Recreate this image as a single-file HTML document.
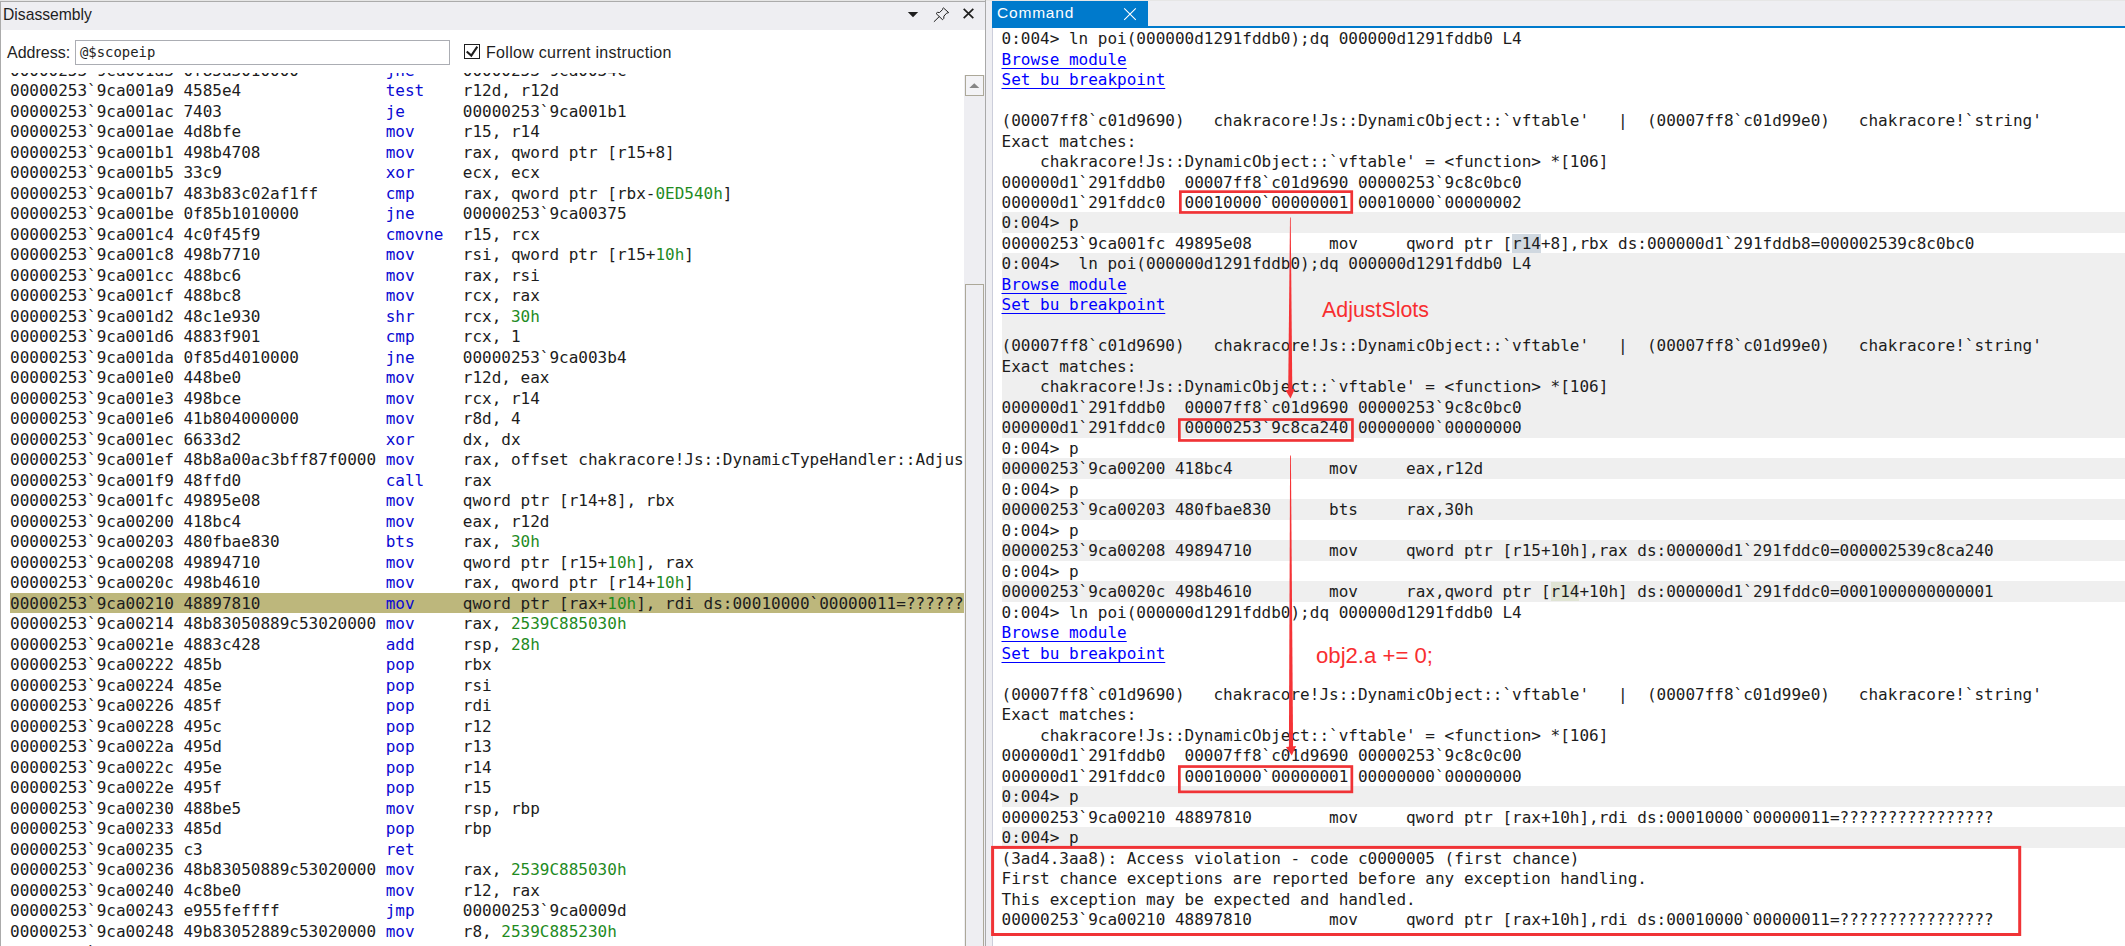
<!DOCTYPE html>
<html lang="en">
<head>
<meta charset="utf-8">
<title>WinDbg - Disassembly / Command</title>
<style>
html,body{margin:0;padding:0;}
body{width:2125px;height:946px;position:relative;overflow:hidden;background:#fff;
 font-family:"Liberation Sans",sans-serif;color:#1e1e1e;}
.abs{position:absolute;}
/* ---------- left panel ---------- */
#lp{position:absolute;left:0;top:0;width:986px;height:946px;background:#fff;overflow:hidden;}
#lp .topb{position:absolute;left:0;top:0;width:986px;height:1px;background:#e6e6e6;border-bottom:1px solid #ababab;}
#lp .leftb{position:absolute;left:0;top:1px;width:1px;height:945px;background:#ababab;}
#lp .rightb{position:absolute;left:985px;top:0;width:1px;height:946px;background:#a9a9a9;}
#ltitle{position:absolute;left:1px;top:2px;width:984px;height:28px;background:#eeeef2;}
#ltitle .t{position:absolute;left:2px;top:0;height:25px;line-height:25px;font-size:15.7px;color:#1e1e1e;}
#addr{position:absolute;left:7px;top:43px;font-size:16px;line-height:20px;color:#1e1e1e;}
#inp{position:absolute;left:75px;top:40px;width:373px;height:23px;border:1px solid #abadb3;background:#fff;
 font-family:"DejaVu Sans Mono","Liberation Mono",monospace;font-size:13.9px;line-height:23px;text-indent:4px;color:#1e1e1e;}
#cb{position:absolute;left:464px;top:44px;width:14px;height:13px;border:1px solid #1e1e1e;background:#fff;}
#cbl{position:absolute;left:486px;top:42.5px;font-size:16px;line-height:20px;letter-spacing:0.3px;color:#1e1e1e;}
#lrows{position:absolute;left:1px;top:73px;width:963px;height:873px;overflow:hidden;}
#lrows .in{position:absolute;left:0;top:-73px;width:963px;height:946px;}
.r,.q{position:absolute;white-space:pre;font-family:"DejaVu Sans Mono","Liberation Mono",monospace;
 font-size:16px;line-height:22px;color:#1c1c1c;}
.r{left:9px;width:954px;}
.r b{font-weight:normal;color:#0a0ad2;}
.r i{font-style:normal;color:#1f8b1f;}
.r.hl{background:#bdb77c;}
#lsb{position:absolute;left:964px;top:75px;width:21px;height:871px;background:#eeeef2;}
#lsb .up{position:absolute;left:1px;top:0px;width:17px;height:19px;border:1px solid #aca899;background:#f3f3f6;}
#lsb .thumb{position:absolute;left:1px;top:209px;width:17px;height:700px;border:1px solid #aca899;background:#eeeef2;}
/* ---------- splitter ---------- */
#split{position:absolute;left:986px;top:0;width:7px;height:946px;background:#eeeef2;border-top:1px solid #e6e6e6;box-sizing:border-box;}
/* ---------- right panel ---------- */
#rp{position:absolute;left:992px;top:0;width:1133px;height:946px;background:#fff;overflow:hidden;}
#rp .strip{position:absolute;left:0;top:0;width:1133px;height:26px;background:#eeeef2;}
#rp .topb{position:absolute;left:0;top:0;width:1133px;height:1px;background:#e6e6e6;}
#tab{position:absolute;left:0;top:1px;width:156px;height:25px;background:#007acc;color:#fff;}
#tab .t{position:absolute;left:5px;top:0;font-size:15.5px;line-height:23px;letter-spacing:0.8px;}
#rp .bl{position:absolute;left:0;top:26px;width:1133px;height:2px;background:#007acc;}
#rp .lb{position:absolute;left:0;top:28px;width:1px;height:918px;background:#cccedb;}
.q{left:1002px;width:1123px;text-indent:-0.5px;}
.q.g{background:#efefef;}
.q a{color:#0000ff;text-decoration:underline;text-underline-offset:3px;text-decoration-thickness:1.4px;}
.sa{background:#d0d8e0;}
.sb{background:#e0e4d4;}
svg{position:absolute;left:0;top:0;}
</style>
</head>
<body>
<div id="lp">
  <div class="topb"></div>
  <div id="ltitle"><div class="t">Disassembly</div></div>
  <div id="addr">Address:</div>
  <div id="inp">@$scopeip</div>
  <div id="cb"></div>
  <div id="cbl">Follow current instruction</div>
  <div id="lrows"><div class="in">
<div class="r" style="top:60px;height:20px">00000253`9ca001a3 0f85a3010000         <b>jne     </b>00000253`9ca0034c</div>
<div class="r" style="top:80px;height:21px">00000253`9ca001a9 4585e4               <b>test    </b>r12d, r12d</div>
<div class="r" style="top:101px;height:20px">00000253`9ca001ac 7403                 <b>je      </b>00000253`9ca001b1</div>
<div class="r" style="top:121px;height:21px">00000253`9ca001ae 4d8bfe               <b>mov     </b>r15, r14</div>
<div class="r" style="top:142px;height:20px">00000253`9ca001b1 498b4708             <b>mov     </b>rax, qword ptr [r15+8]</div>
<div class="r" style="top:162px;height:21px">00000253`9ca001b5 33c9                 <b>xor     </b>ecx, ecx</div>
<div class="r" style="top:183px;height:20px">00000253`9ca001b7 483b83c02af1ff       <b>cmp     </b>rax, qword ptr [rbx-<i>0ED540h</i>]</div>
<div class="r" style="top:203px;height:21px">00000253`9ca001be 0f85b1010000         <b>jne     </b>00000253`9ca00375</div>
<div class="r" style="top:224px;height:20px">00000253`9ca001c4 4c0f45f9             <b>cmovne  </b>r15, rcx</div>
<div class="r" style="top:244px;height:21px">00000253`9ca001c8 498b7710             <b>mov     </b>rsi, qword ptr [r15+<i>10h</i>]</div>
<div class="r" style="top:265px;height:20px">00000253`9ca001cc 488bc6               <b>mov     </b>rax, rsi</div>
<div class="r" style="top:285px;height:21px">00000253`9ca001cf 488bc8               <b>mov     </b>rcx, rax</div>
<div class="r" style="top:306px;height:20px">00000253`9ca001d2 48c1e930             <b>shr     </b>rcx, <i>30h</i></div>
<div class="r" style="top:326px;height:21px">00000253`9ca001d6 4883f901             <b>cmp     </b>rcx, 1</div>
<div class="r" style="top:347px;height:20px">00000253`9ca001da 0f85d4010000         <b>jne     </b>00000253`9ca003b4</div>
<div class="r" style="top:367px;height:21px">00000253`9ca001e0 448be0               <b>mov     </b>r12d, eax</div>
<div class="r" style="top:388px;height:20px">00000253`9ca001e3 498bce               <b>mov     </b>rcx, r14</div>
<div class="r" style="top:408px;height:21px">00000253`9ca001e6 41b804000000         <b>mov     </b>r8d, 4</div>
<div class="r" style="top:429px;height:20px">00000253`9ca001ec 6633d2               <b>xor     </b>dx, dx</div>
<div class="r" style="top:449px;height:21px">00000253`9ca001ef 48b8a00ac3bff87f0000 <b>mov     </b>rax, offset chakracore!Js::DynamicTypeHandler::AdjustSlots (00007ff8`bfc30aa0)</div>
<div class="r" style="top:470px;height:20px">00000253`9ca001f9 48ffd0               <b>call    </b>rax</div>
<div class="r" style="top:490px;height:21px">00000253`9ca001fc 49895e08             <b>mov     </b>qword ptr [r14+8], rbx</div>
<div class="r" style="top:511px;height:20px">00000253`9ca00200 418bc4               <b>mov     </b>eax, r12d</div>
<div class="r" style="top:531px;height:21px">00000253`9ca00203 480fbae830           <b>bts     </b>rax, <i>30h</i></div>
<div class="r" style="top:552px;height:20px">00000253`9ca00208 49894710             <b>mov     </b>qword ptr [r15+<i>10h</i>], rax</div>
<div class="r" style="top:572px;height:21px">00000253`9ca0020c 498b4610             <b>mov     </b>rax, qword ptr [r14+<i>10h</i>]</div>
<div class="r hl" style="top:593px;height:20px">00000253`9ca00210 48897810             <b>mov     </b>qword ptr [rax+<i>10h</i>], rdi ds:00010000`00000011=????????????????</div>
<div class="r" style="top:613px;height:21px">00000253`9ca00214 48b83050889c53020000 <b>mov     </b>rax, <i>2539C885030h</i></div>
<div class="r" style="top:634px;height:20px">00000253`9ca0021e 4883c428             <b>add     </b>rsp, <i>28h</i></div>
<div class="r" style="top:654px;height:21px">00000253`9ca00222 485b                 <b>pop     </b>rbx</div>
<div class="r" style="top:675px;height:20px">00000253`9ca00224 485e                 <b>pop     </b>rsi</div>
<div class="r" style="top:695px;height:21px">00000253`9ca00226 485f                 <b>pop     </b>rdi</div>
<div class="r" style="top:716px;height:20px">00000253`9ca00228 495c                 <b>pop     </b>r12</div>
<div class="r" style="top:736px;height:21px">00000253`9ca0022a 495d                 <b>pop     </b>r13</div>
<div class="r" style="top:757px;height:20px">00000253`9ca0022c 495e                 <b>pop     </b>r14</div>
<div class="r" style="top:777px;height:21px">00000253`9ca0022e 495f                 <b>pop     </b>r15</div>
<div class="r" style="top:798px;height:20px">00000253`9ca00230 488be5               <b>mov     </b>rsp, rbp</div>
<div class="r" style="top:818px;height:21px">00000253`9ca00233 485d                 <b>pop     </b>rbp</div>
<div class="r" style="top:839px;height:20px">00000253`9ca00235 c3                   <b>ret</b></div>
<div class="r" style="top:859px;height:21px">00000253`9ca00236 48b83050889c53020000 <b>mov     </b>rax, <i>2539C885030h</i></div>
<div class="r" style="top:880px;height:20px">00000253`9ca00240 4c8be0               <b>mov     </b>r12, rax</div>
<div class="r" style="top:900px;height:21px">00000253`9ca00243 e955feffff           <b>jmp     </b>00000253`9ca0009d</div>
<div class="r" style="top:921px;height:20px">00000253`9ca00248 49b83052889c53020000 <b>mov     </b>r8, <i>2539C885230h</i></div>
<div class="r" style="top:942px;height:20px">00000253`9ca00252 49bb3052889c5b020000 <b>mov     </b>rdx, <i>2539C8850b0h</i></div>
  </div></div>
  <div id="lsb"><div class="up"></div><div class="thumb"></div></div>
  <div class="leftb"></div><div class="rightb"></div>
</div>
<div id="split"></div>
<div id="rp">
  <div class="strip"></div><div class="topb"></div>
  <div id="tab"><div class="t">Command</div></div>
  <div class="bl"></div><div class="lb"></div>
  <div id="rrows" style="position:absolute;left:-992px;top:0;width:2125px;height:946px;">
<div class="q" style="top:28px;height:21px">0:004&gt; ln poi(000000d1291fddb0);dq 000000d1291fddb0 L4</div>
<div class="q" style="top:49px;height:20px"><a>Browse module</a></div>
<div class="q" style="top:69px;height:21px"><a>Set bu breakpoint</a></div>
<div class="q" style="top:90px;height:20px"></div>
<div class="q" style="top:110px;height:21px">(00007ff8`c01d9690)   chakracore!Js::DynamicObject::`vftable'   |  (00007ff8`c01d99e0)   chakracore!`string'</div>
<div class="q" style="top:131px;height:20px">Exact matches:</div>
<div class="q" style="top:151px;height:21px">    chakracore!Js::DynamicObject::`vftable' = &lt;function&gt; *[106]</div>
<div class="q" style="top:172px;height:20px">000000d1`291fddb0  00007ff8`c01d9690 00000253`9c8c0bc0</div>
<div class="q" style="top:192px;height:20px">000000d1`291fddc0  00010000`00000001 00010000`00000002</div>
<div class="q g" style="top:212px;height:21px">0:004&gt; p</div>
<div class="q" style="top:233px;height:20px">00000253`9ca001fc 49895e08        mov     qword ptr [<span class="sa">r14</span>+8],rbx ds:000000d1`291fddb8=000002539c8c0bc0</div>
<div class="q g" style="top:253px;height:21px">0:004&gt;  ln poi(000000d1291fddb0);dq 000000d1291fddb0 L4</div>
<div class="q g" style="top:274px;height:20px"><a>Browse module</a></div>
<div class="q g" style="top:294px;height:21px"><a>Set bu breakpoint</a></div>
<div class="q g" style="top:315px;height:20px"></div>
<div class="q g" style="top:335px;height:21px">(00007ff8`c01d9690)   chakracore!Js::DynamicObject::`vftable'   |  (00007ff8`c01d99e0)   chakracore!`string'</div>
<div class="q g" style="top:356px;height:20px">Exact matches:</div>
<div class="q g" style="top:376px;height:21px">    chakracore!Js::DynamicObject::`vftable' = &lt;function&gt; *[106]</div>
<div class="q g" style="top:397px;height:20px">000000d1`291fddb0  00007ff8`c01d9690 00000253`9c8c0bc0</div>
<div class="q g" style="top:417px;height:21px">000000d1`291fddc0  00000253`9c8ca240 00000000`00000000</div>
<div class="q" style="top:438px;height:20px">0:004&gt; p</div>
<div class="q g" style="top:458px;height:21px">00000253`9ca00200 418bc4          mov     eax,r12d</div>
<div class="q" style="top:479px;height:20px">0:004&gt; p</div>
<div class="q g" style="top:499px;height:21px">00000253`9ca00203 480fbae830      bts     rax,30h</div>
<div class="q" style="top:520px;height:20px">0:004&gt; p</div>
<div class="q g" style="top:540px;height:21px">00000253`9ca00208 49894710        mov     qword ptr [r15+10h],rax ds:000000d1`291fddc0=000002539c8ca240</div>
<div class="q" style="top:561px;height:20px">0:004&gt; p</div>
<div class="q g" style="top:581px;height:21px">00000253`9ca0020c 498b4610        mov     rax,qword ptr [<span class="sb">r14</span>+10h] ds:000000d1`291fddc0=0001000000000001</div>
<div class="q" style="top:602px;height:20px">0:004&gt; ln poi(000000d1291fddb0);dq 000000d1291fddb0 L4</div>
<div class="q" style="top:622px;height:21px"><a>Browse module</a></div>
<div class="q" style="top:643px;height:20px"><a>Set bu breakpoint</a></div>
<div class="q" style="top:663px;height:21px"></div>
<div class="q" style="top:684px;height:20px">(00007ff8`c01d9690)   chakracore!Js::DynamicObject::`vftable'   |  (00007ff8`c01d99e0)   chakracore!`string'</div>
<div class="q" style="top:704px;height:21px">Exact matches:</div>
<div class="q" style="top:725px;height:20px">    chakracore!Js::DynamicObject::`vftable' = &lt;function&gt; *[106]</div>
<div class="q" style="top:745px;height:21px">000000d1`291fddb0  00007ff8`c01d9690 00000253`9c8c0c00</div>
<div class="q" style="top:766px;height:20px">000000d1`291fddc0  00010000`00000001 00000000`00000000</div>
<div class="q g" style="top:786px;height:21px">0:004&gt; p</div>
<div class="q" style="top:807px;height:20px">00000253`9ca00210 48897810        mov     qword ptr [rax+10h],rdi ds:00010000`00000011=????????????????</div>
<div class="q g" style="top:827px;height:21px">0:004&gt; p</div>
<div class="q" style="top:848px;height:20px">(3ad4.3aa8): Access violation - code c0000005 (first chance)</div>
<div class="q" style="top:868px;height:21px">First chance exceptions are reported before any exception handling.</div>
<div class="q" style="top:889px;height:20px">This exception may be expected and handled.</div>
<div class="q" style="top:909px;height:21px">00000253`9ca00210 48897810        mov     qword ptr [rax+10h],rdi ds:00010000`00000011=????????????????</div>
  </div>
</div>
<svg width="2125" height="946" viewBox="0 0 2125 946">
  <!-- title bar icons -->
  <polygon points="907.8,12 918.2,12 913,17.2" fill="#1e1e1e"/>
  <path d="M943.4,7.9 L948.7,12.6 L946.6,13.2 L943.9,16.1 L943.8,18.4 L942.5,19.7 L936.1,13.5 L937.4,12.4 L939.6,12.5 L942.5,9.6 L942.7,8.5 Z M939.3,16.6 L933.9,21.8" fill="none" stroke="#1e1e1e" stroke-width="1" stroke-linejoin="miter"/>
  <path d="M963.7,8.8 L973.3,18.2 M973.3,8.8 L963.7,18.2" fill="none" stroke="#1e1e1e" stroke-width="1.7"/>
  <!-- tab close -->
  <path d="M1124.2,8.3 L1135.8,19.9 M1135.8,8.3 L1124.2,19.9" fill="none" stroke="#ffffff" stroke-width="1.1"/>
  <!-- checkbox mark -->
  <path d="M466.7,51.5 L471.3,55.6 L477.3,46.7" fill="none" stroke="#1e1e1e" stroke-width="2.1"/>
  <!-- scrollbar arrow -->
  <polygon points="969.3,88 979.3,88 974.3,83.2" fill="#868686"/>
  <!-- red annotations -->
  <g fill="none" stroke="#f03336" stroke-width="2.7">
    <rect x="1180.35" y="191.65" width="171.4" height="20.8"/>
    <rect x="1179.35" y="419.55" width="173.1" height="20.9"/>
    <rect x="1179.35" y="766.55" width="172.5" height="25.3"/>
  </g>
  <rect x="992.6" y="847.4" width="1027.1" height="87.1" fill="none" stroke="#f03336" stroke-width="3"/>
  <g fill="#f53336">
    <polygon points="1290.0,217.5 1290.7,217.5 1292.3,390 1288.2,390"/>
    <polygon points="1285.5,390.2 1294.8,389 1290.5,398.5"/>
    <polygon points="1290.1,455.4 1290.9,455.4 1293.1,747 1288.9,747"/>
    <polygon points="1285.9,747.1 1296.1,746.1 1291.8,755.5"/>
  </g>
  <text x="1322" y="317.2" font-family="'Liberation Sans','Noto Sans CJK SC',sans-serif" font-size="22" fill="#f82e30" textLength="107" lengthAdjust="spacingAndGlyphs">AdjustSlots</text>
  <text x="1316" y="663" font-family="'Liberation Sans','Noto Sans CJK SC',sans-serif" font-size="22" fill="#f82e30" textLength="117" lengthAdjust="spacingAndGlyphs">obj2.a += 0;</text>
</svg>

</body>
</html>
